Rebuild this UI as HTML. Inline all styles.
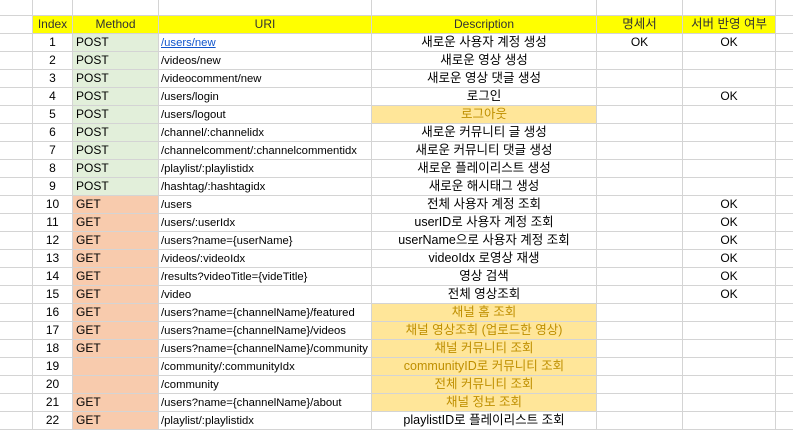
<!DOCTYPE html>
<html><head><meta charset="utf-8"><style>
body{margin:0;width:793px;height:426px;overflow:hidden;background:#fff;font-family:"Liberation Sans","Noto Sans CJK KR",sans-serif;font-size:12px;color:#000}
table{position:absolute;left:-1px;top:-3px;border-collapse:collapse;table-layout:fixed;width:794px}
td{border:1px solid #d4d4d4;height:17px;padding:0 3px;white-space:nowrap;overflow:hidden;line-height:17px}
td.u{font-size:11.3px;padding-left:2px}
td.u span,td.u a{position:relative;top:1px}
.c{text-align:center}
.h td{background:#ffff00;color:#333;text-align:center}
.h td.e{background:#fff}
.g{background:#e2efda}
.o{background:#f8cbad}
.y{background:#ffe699;color:#bf8f00}
.k{font-size:12.5px}
a{color:#1155cc}
</style></head><body>
<table>
<colgroup><col style="width:33px"><col style="width:40px"><col style="width:86px"><col style="width:213px"><col style="width:225px"><col style="width:86px"><col style="width:93px"><col style="width:18px"></colgroup>
<tr><td></td><td></td><td></td><td></td><td></td><td></td><td></td><td></td></tr>
<tr class="h"><td class="e"></td><td>Index</td><td>Method</td><td>URI</td><td>Description</td><td class="k">명세서</td><td class="k">서버 반영 여부</td><td class="e"></td></tr>
<tr><td></td><td class="c">1</td><td class="g">POST</td><td class="u"><a href="#">/users/new</a></td><td class="c k">새로운 사용자 계정 생성</td><td class="c">OK</td><td class="c">OK</td><td></td></tr>
<tr><td></td><td class="c">2</td><td class="g">POST</td><td class="u"><span>/videos/new</span></td><td class="c k">새로운 영상 생성</td><td></td><td></td><td></td></tr>
<tr><td></td><td class="c">3</td><td class="g">POST</td><td class="u"><span>/videocomment/new</span></td><td class="c k">새로운 영상 댓글 생성</td><td></td><td></td><td></td></tr>
<tr><td></td><td class="c">4</td><td class="g">POST</td><td class="u"><span>/users/login</span></td><td class="c k">로그인</td><td></td><td class="c">OK</td><td></td></tr>
<tr><td></td><td class="c">5</td><td class="g">POST</td><td class="u"><span>/users/logout</span></td><td class="c k y">로그아웃</td><td></td><td></td><td></td></tr>
<tr><td></td><td class="c">6</td><td class="g">POST</td><td class="u"><span>/channel/:channelidx</span></td><td class="c k">새로운 커뮤니티 글 생성</td><td></td><td></td><td></td></tr>
<tr><td></td><td class="c">7</td><td class="g">POST</td><td class="u"><span>/channelcomment/:channelcommentidx</span></td><td class="c k">새로운 커뮤니티 댓글 생성</td><td></td><td></td><td></td></tr>
<tr><td></td><td class="c">8</td><td class="g">POST</td><td class="u"><span>/playlist/:playlistidx</span></td><td class="c k">새로운 플레이리스트 생성</td><td></td><td></td><td></td></tr>
<tr><td></td><td class="c">9</td><td class="g">POST</td><td class="u"><span>/hashtag/:hashtagidx</span></td><td class="c k">새로운 해시태그 생성</td><td></td><td></td><td></td></tr>
<tr><td></td><td class="c">10</td><td class="o">GET</td><td class="u"><span>/users</span></td><td class="c k">전체 사용자 계정 조회</td><td></td><td class="c">OK</td><td></td></tr>
<tr><td></td><td class="c">11</td><td class="o">GET</td><td class="u"><span>/users/:userIdx</span></td><td class="c k">userID로 사용자 계정 조회</td><td></td><td class="c">OK</td><td></td></tr>
<tr><td></td><td class="c">12</td><td class="o">GET</td><td class="u"><span>/users?name={userName}</span></td><td class="c k">userName으로 사용자 계정 조회</td><td></td><td class="c">OK</td><td></td></tr>
<tr><td></td><td class="c">13</td><td class="o">GET</td><td class="u"><span>/videos/:videoIdx</span></td><td class="c k">videoIdx 로영상 재생</td><td></td><td class="c">OK</td><td></td></tr>
<tr><td></td><td class="c">14</td><td class="o">GET</td><td class="u"><span>/results?videoTitle={videTitle}</span></td><td class="c k">영상 검색</td><td></td><td class="c">OK</td><td></td></tr>
<tr><td></td><td class="c">15</td><td class="o">GET</td><td class="u"><span>/video</span></td><td class="c k">전체 영상조회</td><td></td><td class="c">OK</td><td></td></tr>
<tr><td></td><td class="c">16</td><td class="o">GET</td><td class="u"><span>/users?name={channelName}/featured</span></td><td class="c k y">채널 홈 조회</td><td></td><td></td><td></td></tr>
<tr><td></td><td class="c">17</td><td class="o">GET</td><td class="u"><span>/users?name={channelName}/videos</span></td><td class="c k y">채널 영상조회 (업로드한 영상)</td><td></td><td></td><td></td></tr>
<tr><td></td><td class="c">18</td><td class="o">GET</td><td class="u"><span>/users?name={channelName}/community</span></td><td class="c k y">채널 커뮤니티 조회</td><td></td><td></td><td></td></tr>
<tr><td></td><td class="c">19</td><td class="o"></td><td class="u"><span>/community/:communityIdx</span></td><td class="c k y">communityID로 커뮤니티 조회</td><td></td><td></td><td></td></tr>
<tr><td></td><td class="c">20</td><td class="o"></td><td class="u"><span>/community</span></td><td class="c k y">전체 커뮤니티 조회</td><td></td><td></td><td></td></tr>
<tr><td></td><td class="c">21</td><td class="o">GET</td><td class="u"><span>/users?name={channelName}/about</span></td><td class="c k y">채널 정보 조회</td><td></td><td></td><td></td></tr>
<tr><td></td><td class="c">22</td><td class="o">GET</td><td class="u"><span>/playlist/:playlistidx</span></td><td class="c k">playlistID로 플레이리스트 조회</td><td></td><td></td><td></td></tr>
</table>
</body></html>
